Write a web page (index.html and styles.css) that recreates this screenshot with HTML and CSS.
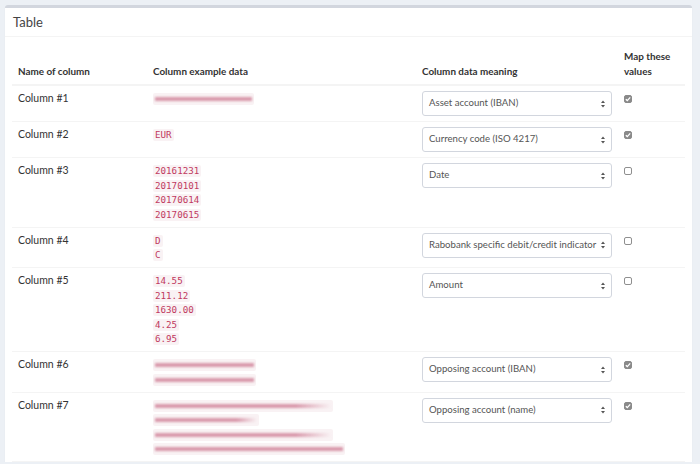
FILE: index.html
```html
<!DOCTYPE html>
<html>
<head>
<meta charset="utf-8">
<link rel="stylesheet" href="styles.css">
</head>
<body>
<div class="box">
  <div class="box-header"><h3 class="box-title">Table</h3></div>
  <div class="box-body">
    <table class="tbl">
      <colgroup><col class="c1"><col class="c2"><col class="c3"><col class="c4"></colgroup>
      <thead>
        <tr>
          <th>Name of column</th>
          <th>Column example data</th>
          <th>Column data meaning</th>
          <th>Map these values</th>
        </tr>
      </thead>
      <tbody>
        <tr>
          <td>Column #1</td>
          <td><div class="lines"><code class="red"><span class="blur" style="width:97px"></span></code></div></td>
          <td><div class="sel"><span>Asset account (IBAN)</span><svg class="arr" width="6" height="10" viewBox="0 0 6 10"><path d="M3 1.5 L5 4 H1 Z M3 8.5 L5 6 H1 Z" fill="#555"/></svg></div></td>
          <td><span class="cb on"><svg width="8" height="8" viewBox="0 0 8 8"><path d="M1.8 4.2 L3.3 5.6 L6.2 2.4" stroke="#fff" stroke-width="1.3" fill="none"/></svg></span></td>
        </tr>
        <tr>
          <td>Column #2</td>
          <td><div class="lines"><code>EUR</code></div></td>
          <td><div class="sel"><span>Currency code (ISO 4217)</span><svg class="arr" width="6" height="10" viewBox="0 0 6 10"><path d="M3 1.5 L5 4 H1 Z M3 8.5 L5 6 H1 Z" fill="#555"/></svg></div></td>
          <td><span class="cb on"><svg width="8" height="8" viewBox="0 0 8 8"><path d="M1.8 4.2 L3.3 5.6 L6.2 2.4" stroke="#fff" stroke-width="1.3" fill="none"/></svg></span></td>
        </tr>
        <tr>
          <td>Column #3</td>
          <td><div class="lines"><code>20161231</code><code>20170101</code><code>20170614</code><code>20170615</code></div></td>
          <td><div class="sel"><span>Date</span><svg class="arr" width="6" height="10" viewBox="0 0 6 10"><path d="M3 1.5 L5 4 H1 Z M3 8.5 L5 6 H1 Z" fill="#555"/></svg></div></td>
          <td><span class="cb"></span></td>
        </tr>
        <tr>
          <td>Column #4</td>
          <td><div class="lines"><code>D</code><code>C</code></div></td>
          <td><div class="sel"><span>Rabobank specific debit/credit indicator</span><svg class="arr" width="6" height="10" viewBox="0 0 6 10"><path d="M3 1.5 L5 4 H1 Z M3 8.5 L5 6 H1 Z" fill="#555"/></svg></div></td>
          <td><span class="cb"></span></td>
        </tr>
        <tr>
          <td>Column #5</td>
          <td><div class="lines"><code>14.55</code><code>211.12</code><code>1630.00</code><code>4.25</code><code>6.95</code></div></td>
          <td><div class="sel"><span>Amount</span><svg class="arr" width="6" height="10" viewBox="0 0 6 10"><path d="M3 1.5 L5 4 H1 Z M3 8.5 L5 6 H1 Z" fill="#555"/></svg></div></td>
          <td><span class="cb"></span></td>
        </tr>
        <tr>
          <td>Column #6</td>
          <td><div class="lines"><code class="red"><span class="blur" style="width:99px"></span></code><code class="red"><span class="blur" style="width:99px"></span></code></div></td>
          <td><div class="sel"><span>Opposing account (IBAN)</span><svg class="arr" width="6" height="10" viewBox="0 0 6 10"><path d="M3 1.5 L5 4 H1 Z M3 8.5 L5 6 H1 Z" fill="#555"/></svg></div></td>
          <td><span class="cb on"><svg width="8" height="8" viewBox="0 0 8 8"><path d="M1.8 4.2 L3.3 5.6 L6.2 2.4" stroke="#fff" stroke-width="1.3" fill="none"/></svg></span></td>
        </tr>
        <tr>
          <td>Column #7</td>
          <td><div class="lines"><code class="red"><span class="blur fade" style="width:176px"></span></code><code class="red"><span class="blur fade" style="width:102px"></span></code><code class="red"><span class="blur fade" style="width:176px"></span></code><code class="red"><span class="blur" style="width:188px"></span></code></div></td>
          <td><div class="sel"><span>Opposing account (name)</span><svg class="arr" width="6" height="10" viewBox="0 0 6 10"><path d="M3 1.5 L5 4 H1 Z M3 8.5 L5 6 H1 Z" fill="#555"/></svg></div></td>
          <td><span class="cb on"><svg width="8" height="8" viewBox="0 0 8 8"><path d="M1.8 4.2 L3.3 5.6 L6.2 2.4" stroke="#fff" stroke-width="1.3" fill="none"/></svg></span></td>
        </tr>
      </tbody>
    </table>
  </div>
</div>
</body>
</html>
```

FILE: styles.css
```css
html, body {
  margin: 0;
  padding: 0;
}
body {
  background: #ecf0f5;
  font-family: "Lato", "Open Sans", sans-serif;
  font-size: 10.5px;
  color: #333;
  padding: 5px 8px 0 5px;
}
.box {
  background: #fff;
  border-top: 3px solid #d2d6de;
  border-radius: 3px 3px 0 0;
  box-shadow: 0 1px 1px rgba(0,0,0,0.1);
}
.box-header {
  height: 28px;
  border-bottom: 1px solid #f4f4f4;
  display: flex;
  align-items: center;
  padding: 0 8px;
}
.box-title {
  margin: 0;
  font-size: 13px;
  font-weight: normal;
  color: #444;
}
.box-body {
  padding: 7px 7px 0 7px;
}
.tbl {
  width: 100%;
  border-collapse: collapse;
  table-layout: fixed;
  border-bottom: 1px solid #f4f4f4;
}
.c1 { width: 135px; }
.c2 { width: 269px; }
.c3 { width: 202px; }
.c4 { width: auto; }
.tbl th {
  text-align: left;
  font-weight: bold;
  font-size: 9.9px;
  vertical-align: bottom;
  padding: 5px 6px;
  line-height: 15px;
  border-bottom: 2px solid #f4f4f4;
}
.tbl td {
  vertical-align: top;
  padding: 5px 6px;
  line-height: 14.6px;
  border-top: 1px solid #f4f4f4;
}
.tbl thead + tbody tr:first-child td {
  border-top: 0;
}
.lines {
  display: flex;
  flex-direction: column;
  align-items: flex-start;
  gap: 2.5px;
  padding: 2px 0 1px;
}
code {
  display: block;
  height: 12px;
  line-height: 12px;
  font-family: "DejaVu Sans Mono", monospace;
  font-size: 9.2px;
  color: #c0395e;
  background: #f9f2f4;
  padding: 0 2px;
  border-radius: 2px;
}
code.red {
  padding: 0 2px;
}
.blur {
  display: block;
  height: 4px;
  margin-top: 4px;
  background: #d99aac;
  filter: blur(0.8px);
}
.blur.fade {
  background: linear-gradient(to right, #d99aac 0%, #d99aac 80%, rgba(217,154,172,0) 100%);
}
.sel {
  width: 190px;
  height: 25px;
  box-sizing: border-box;
  border: 1px solid #d2d6de;
  border-radius: 3px;
  display: flex;
  align-items: center;
  justify-content: space-between;
  padding: 0 5px 0 6px;
  font-size: 9.6px;
  color: #555;
  white-space: nowrap;
}
.arr {
  flex: none;
}
.cb {
  display: inline-block;
  width: 8px;
  height: 8px;
  box-sizing: border-box;
  border: 1px solid #8f8f8f;
  border-radius: 2px;
  background: #fff;
  margin-top: 4px;
  position: relative;
}
.cb.on {
  background: #8a8a8a;
  border-color: #8a8a8a;
}
.cb svg {
  position: absolute;
  left: -1px;
  top: -1px;
}
```
